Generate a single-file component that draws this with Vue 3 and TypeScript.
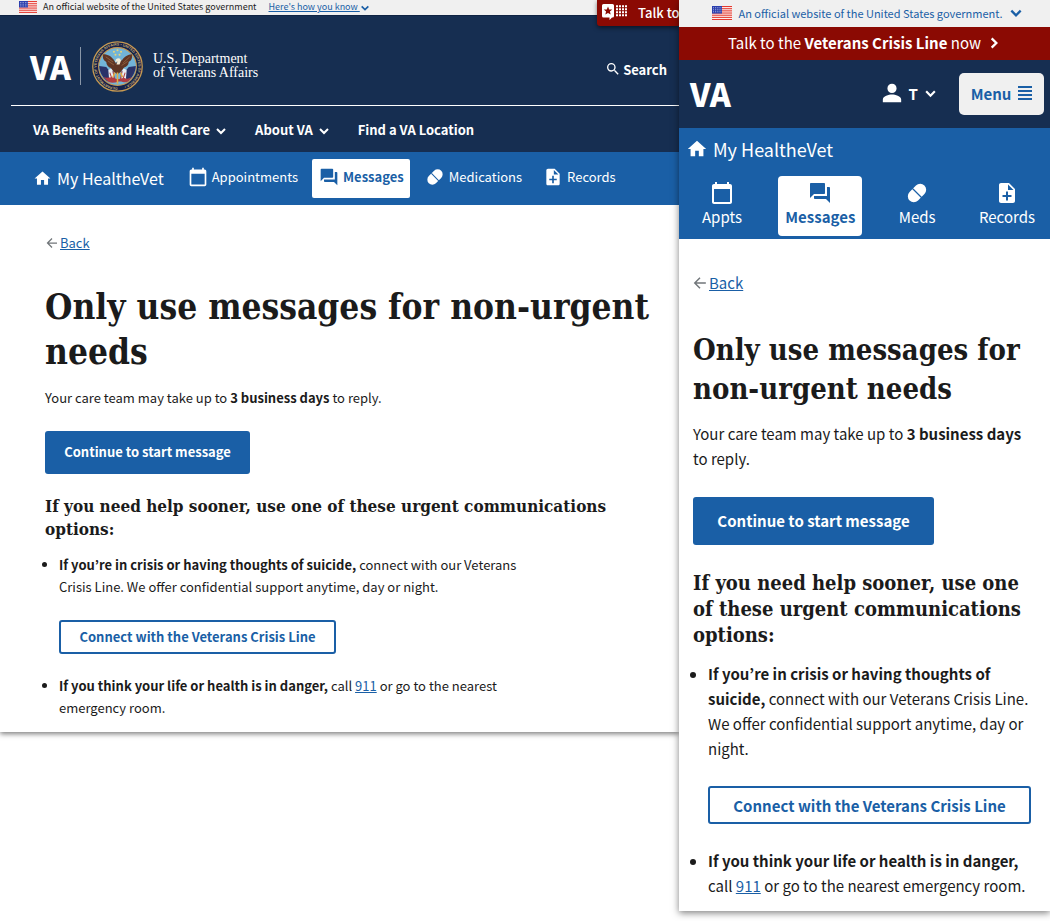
<script setup lang="ts">
interface NavItem {
  label: string
  icon: 'calendar' | 'forum' | 'pill' | 'record'
  active?: boolean
}

const desktopNav: NavItem[] = [
  { label: 'Appointments', icon: 'calendar' },
  { label: 'Messages', icon: 'forum', active: true },
  { label: 'Medications', icon: 'pill' },
  { label: 'Records', icon: 'record' },
]

const mobileNav: NavItem[] = [
  { label: 'Appts', icon: 'calendar' },
  { label: 'Messages', icon: 'forum', active: true },
  { label: 'Meds', icon: 'pill' },
  { label: 'Records', icon: 'record' },
]

const stripes = [0, 2, 4, 6, 8, 10, 12]
const sealLetters = 'DEPARTMENT OF VETERANS AFFAIRS • UNITED STATES OF AMERICA •'
</script>

<template>
  <svg class="defs" aria-hidden="true">
    <symbol id="i-home" viewBox="0 0 24 24"><path d="M10 20v-6h4v6h5v-8h3L12 3 2 12h3v8z" /></symbol>
    <symbol id="i-calendar" viewBox="0 0 24 24"><path d="M20 3h-1V1h-2v2H7V1H5v2H4c-1.100 0-2 .9-2 2v16c0 1.100.9 2 2 2h16c1.100 0 2-.9 2-2V5c0-1.100-.9-2-2-2zm0 18H4V8h16v13z" /></symbol>
    <symbol id="i-forum" viewBox="0 0 24 24"><path d="M21 6h-2v9H6v2c0 .55.45 1 1 1h11l4 4V7c0-.55-.45-1-1-1zm-4 6V3c0-.55-.45-1-1-1H3c-.55 0-1 .45-1 1v14l4-4h10c.55 0 1-.45 1-1z" /></symbol>
    <symbol id="i-pill" viewBox="0 0 24 24">
      <g transform="rotate(-45 12 12)">
        <path d="M1.500 12a6 6 0 0 1 6-6h9a6 6 0 0 1 0 12h-9a6 6 0 0 1-6-6zM11.400 6v12h1.200V6z" fill-rule="evenodd" />
      </g>
    </symbol>
    <symbol id="i-record" viewBox="0 0 24 24"><path fill-rule="evenodd" d="M14 2H6c-1.100 0-2 .9-2 2v16c0 1.100.9 2 2 2h12c1.100 0 2-.9 2-2V8zm-1 1.500L18.500 9H13zM11 10.500h2V14h3.500v2H13v3.500h-2V16H7.500v-2H11z" /></symbol>
    <symbol id="i-search" viewBox="0 0 24 24"><path d="M15.500 14h-.79l-.28-.27A6.470 6.470 0 0 0 16 9.500 6.500 6.500 0 1 0 9.500 16c1.610 0 3.090-.59 4.230-1.570l.27.28v.79l5 4.990L20.490 19zm-6 0a4.500 4.500 0 1 1 0-9 4.500 4.500 0 0 1 0 9z" /></symbol>
    <symbol id="i-person" viewBox="0 0 24 24"><path d="M12 12c2.800 0 5-2.200 5-5s-2.200-5-5-5-5 2.200-5 5 2.200 5 5 5zm0 1.500c-3.500 0-10 1.700-10 5.500v3h20v-3c0-3.800-6.500-5.500-10-5.500z" /></symbol>
    <symbol id="i-chevron" viewBox="0 0 24 24"><path d="M4 8l8 8 8-8" fill="none" stroke="currentColor" stroke-width="4" /></symbol>
    <symbol id="i-back" viewBox="0 0 24 24"><path d="M22 12H4M12 3l-9 9 9 9" fill="none" stroke="currentColor" stroke-width="2.500" /></symbol>
    <symbol id="i-flag" viewBox="0 0 26 16" preserveAspectRatio="none">
      <rect width="26" height="16" fill="#fff" />
      <rect v-for="s in stripes" :key="s" x="0" :y="s * 16 / 13" width="26" height="1.300" fill="#e4392f" />
      <rect width="13" height="8.600" fill="#2b3fae" />
      <path d="M1.500 2h11M1.500 4.300h11M1.500 6.600h11" stroke="#fff" stroke-width=".9" stroke-dasharray="1 1.400" />
    </symbol>
  </svg>

  <div class="board">
    <section class="panel desktop" aria-label="Desktop view">
      <div class="gov">
        <svg class="flag"><use href="#i-flag" /></svg>
        <span>An official website of the United States government</span>
        <a href="#how">Here's how you know <svg class="chev"><use href="#i-chevron" /></svg></a>
      </div>
      <button class="crisis-tab" type="button">
        <svg viewBox="0 0 25 16" class="chat">
          <path fill="#fff" d="M1.500 0h9A1.500 1.500 0 0 1 12 1.500v10.500a1.500 1.500 0 0 1-1.500 1.500H10L7.500 16v-2.500h-6A1.500 1.500 0 0 1 0 12V1.500A1.500 1.500 0 0 1 1.500 0z" />
          <path fill="#8b0a03" d="M6 2.500l1.200 2.900 3.100.2-2.400 2 .8 3L6 9l-2.700 1.600.8-3-2.400-2 3.100-.2z" />
          <path d="M14 2.200h11M14 5.200h11M14 8.200h11M14 11.200h11" stroke="#fff" stroke-width="2" stroke-dasharray="2 1" />
        </svg>
        <span>Talk to</span>
      </button>

      <header class="masthead">
        <div class="brand">
          <span class="va">VA</span>
          <span class="rule"></span>
          <svg class="seal" viewBox="0 0 100 100" aria-label="Department seal">
            <defs><path id="ring" d="M50 91a41 41 0 1 1 .1 0z" /></defs>
            <circle cx="50" cy="50" r="48.500" fill="#15224c" stroke="#c79a52" stroke-width="2.500" />
            <text class="ringtext"><textPath href="#ring">{{ sealLetters }}</textPath></text>
            <circle cx="50" cy="50" r="37" fill="#72b4d8" stroke="#c79a52" stroke-width="2" />
            <path d="M14 49l14 2 7 9-3 20C21 73 15 62 14 49zM86 49l-14 2-7 9 3 20c11-7 17-18 18-31z" fill="#2a3268" />
            <path d="M32 57l8-4 2 22-8 5zM68 57l-8-4-2 22 8 5z" fill="#e9edf2" />
            <path d="M22 70c8 5 15-2 23 3s14-3 20 0 9-1 14-3l-8 9c-6 5-12-1-20 1s-16 4-22-3z" fill="#b13c42" />
            <path d="M35 62l5 15M41 59l4 19M65 62l-5 15M59 59l-4 19" stroke="#b13c42" stroke-width="2" />
            <path d="M22 26c10 0 16 5 20 10l5 8 3-5c2-4 6-4 8 0 4-6 10-12 20-13 2 8-1 12-6 15 0 6-4 9-9 11l-7 9-6 4-7-4-6-8c-5-2-9-6-9-12-6-3-8-8-6-15z" fill="#603524" />
            <path d="M27 31l14 10M31 39l12 8M74 31L61 43M70 40l-12 8" stroke="#9a6740" stroke-width="1.500" />
            <path d="M47 36c4-4 9-2 10 2l-3 8h-6l2-6-5 1z" fill="#f4ecd8" />
            <path d="M45 62l-4 9M56 62l4 9M50 62v22" stroke="#e5ae45" stroke-width="3" />
            <g fill="#e9d477"><circle cx="50" cy="18" r="2" /><circle cx="43" cy="21" r="2" /><circle cx="57" cy="21" r="2" /><circle cx="46" cy="27" r="2" /><circle cx="54" cy="27" r="2" /></g>
          </svg>
          <span class="dept">U.S. Department<br>of Veterans Affairs</span>
        </div>
        <button class="search" type="button"><svg><use href="#i-search" /></svg>Search</button>
      </header>
      <nav class="mega" aria-label="Main">
        <button type="button">VA Benefits and Health Care <svg class="chev"><use href="#i-chevron" /></svg></button>
        <button type="button">About VA <svg class="chev"><use href="#i-chevron" /></svg></button>
        <a href="#find">Find a VA Location</a>
      </nav>
      <nav class="portal" aria-label="My HealtheVet">
        <a class="home" href="#home"><svg><use href="#i-home" /></svg>My HealtheVet</a>
        <a v-for="item in desktopNav" :key="item.label" :href="'#' + item.icon" class="tab" :class="{ active: item.active }">
          <svg><use :href="'#i-' + item.icon" /></svg>{{ item.label }}
        </a>
      </nav>

      <main class="content">
        <div class="back"><svg><use href="#i-back" /></svg><a href="#back">Back</a></div>
        <h1>Only use messages for <span class="keep">non-urgent</span> needs</h1>
        <p>Your care team may take up to <b>3 business days</b> to reply.</p>
        <button class="primary" type="button">Continue to start message</button>
        <h2>If you need help sooner, use one of these urgent communications options:</h2>
        <ul>
          <li>
            <b>If you’re in crisis or having thoughts of suicide,</b> connect with our Veterans Crisis Line. We offer confidential support anytime, day or night.
            <button class="outline" type="button">Connect with the Veterans Crisis Line</button>
          </li>
          <li><b>If you think your life or health is in danger,</b> call <a href="tel:911">911</a> or go to the nearest emergency room.</li>
        </ul>
      </main>
    </section>

    <section class="panel mobile" aria-label="Mobile view">
      <button class="gov" type="button">
        <svg class="flag"><use href="#i-flag" /></svg>
        <span>An official website of the United States government.</span>
        <svg class="chev"><use href="#i-chevron" /></svg>
      </button>
      <button class="crisis-bar" type="button">
        <span>Talk to the <b>Veterans Crisis Line</b> now</span>
        <svg class="chev"><use href="#i-chevron" /></svg>
      </button>
      <header class="masthead">
        <span class="va">VA</span>
        <button class="user" type="button"><svg class="person"><use href="#i-person" /></svg>T <svg class="chev"><use href="#i-chevron" /></svg></button>
        <button class="menu" type="button">Menu
          <svg viewBox="0 0 14 14"><path d="M0 1h14M0 5h14M0 9h14M0 13h14" stroke="currentColor" stroke-width="2" /></svg>
        </button>
      </header>
      <nav class="portal" aria-label="My HealtheVet mobile">
        <a class="home" href="#home"><svg><use href="#i-home" /></svg>My HealtheVet</a>
        <div class="tabs">
          <a v-for="item in mobileNav" :key="item.label" :href="'#m-' + item.icon" class="tab" :class="{ active: item.active }">
            <svg><use :href="'#i-' + item.icon" /></svg>{{ item.label }}
          </a>
        </div>
      </nav>

      <main class="content">
        <div class="back"><svg><use href="#i-back" /></svg><a href="#back">Back</a></div>
        <h1>Only use messages for <span class="keep">non-urgent</span> needs</h1>
        <p>Your care team may take up to <b>3 business days</b> to reply.</p>
        <button class="primary" type="button">Continue to start message</button>
        <h2>If you need help sooner, use one of these urgent communications options:</h2>
        <ul>
          <li>
            <b>If you’re in crisis or having thoughts of suicide,</b> connect with our Veterans Crisis Line. We offer confidential support anytime, day or night.
            <button class="outline" type="button">Connect with the Veterans Crisis Line</button>
          </li>
          <li><b>If you think your life or health is in danger,</b> call <a href="tel:911">911</a> or go to the nearest emergency room.</li>
        </ul>
      </main>
    </section>
  </div>
</template>

<style>
body {
  margin: 0;
  background: #fff;
}
</style>

<style scoped>
.defs {
  position: absolute;
  width: 0;
  height: 0;
}
.board {
  display: grid;
  grid-template-columns: 679fr 371fr;
  align-items: start;
  padding-bottom: 10px;
  overflow: hidden;
  font-family: "Noto Sans CJK KR", "Noto Sans", sans-serif;
  color: #1b1b1b;
}
button {
  font: inherit;
  color: inherit;
  background: none;
  border: 0;
  padding: 0;
  white-space: nowrap;
}
a {
  color: #1a5fa6;
}
nav a {
  color: #fff;
  text-decoration: none;
}
svg {
  fill: currentColor;
  flex: none;
}
.keep {
  white-space: nowrap;
}
.panel {
  position: relative;
  min-width: 0;
  background: #fff;
}
.desktop {
  box-shadow: 0 2px 5px rgba(0, 0, 0, 0.5);
}
.mobile {
  box-shadow: 0 2px 7px rgba(0, 0, 0, 0.5);
}
.gov {
  display: flex;
  align-items: center;
  background: #f0f0f0;
}
.va {
  font-weight: 900;
  line-height: 1;
  color: #fff;
}
.portal {
  background: #1a5fa6;
  color: #fff;
}
.home,
.tab {
  display: flex;
  align-items: center;
}
.tab.active {
  background: #fff;
  color: #1a5fa6;
  font-weight: 700;
}

.desktop .gov {
  height: 15px;
  box-sizing: border-box;
  padding: 0 0 2px 19px;
  gap: 6px;
  font-size: 9px;
  line-height: 13px;
  white-space: nowrap;
}
.desktop .gov a {
  margin-left: 6px;
}
.desktop .gov .flag {
  width: 18px;
  height: 12px;
}
.desktop .gov .chev {
  width: 10px;
  height: 10px;
  vertical-align: middle;
}
.crisis-tab {
  position: absolute;
  top: 0;
  right: 0;
  width: 82px;
  height: 26px;
  padding: 0 0 2px 5px;
  display: flex;
  align-items: center;
  gap: 11px;
  background: #8b0a03;
  color: #fff;
  font-size: 13px;
  font-weight: 500;
  border-bottom-left-radius: 3px;
  box-shadow: 0 2px 4px rgba(0, 0, 0, 0.5);
}
.chat {
  width: 25px;
  height: 16px;
}
.desktop .masthead {
  display: flex;
  align-items: center;
  justify-content: space-between;
  height: 91px;
  box-sizing: border-box;
  padding: 10px 12px 0 30px;
  border-top: 1px solid #0f2342;
  background: linear-gradient(#fff, #fff) 11px 100% / 100% 1px no-repeat #162e51;
  color: #fff;
}
.brand {
  display: flex;
  align-items: center;
}
.desktop .va {
  font-size: 32px;
}
.rule {
  width: 1px;
  height: 38px;
  margin: 0 11px 0 9px;
  background: #8a97a8;
}
.seal {
  width: 51px;
  height: 51px;
}
.ringtext {
  font: 700 7px "Liberation Sans", sans-serif;
  fill: #c9ab6d;
}
.dept {
  margin-left: 10px;
  font: 14px/14px "Liberation Serif", serif;
}
.search {
  display: flex;
  align-items: center;
  gap: 2px;
  padding-top: 6px;
  font-size: 13px;
  font-weight: 700;
}
.search svg {
  width: 16px;
  height: 16px;
}
.mega {
  display: flex;
  align-items: center;
  gap: 28px;
  height: 46px;
  padding-left: 33px;
  background: #162e51;
  color: #fff;
  font-size: 13px;
  font-weight: 700;
}
.mega .chev {
  width: 12px;
  height: 12px;
  margin-left: 2px;
  vertical-align: middle;
}
.desktop .portal {
  display: flex;
  align-items: center;
  height: 53px;
  box-sizing: border-box;
  padding: 0 0 1px 33px;
  font-size: 13px;
}
.desktop .home {
  gap: 5px;
  margin-right: 17px;
  font-size: 16px;
}
.desktop .home svg {
  width: 19px;
  height: 19px;
}
.desktop .tab {
  gap: 4px;
  box-sizing: border-box;
  height: 39px;
  padding: 0 6px 3px 7px;
  margin-right: 8px;
  border-radius: 2px;
}
.desktop .tab svg {
  width: 20px;
  height: 20px;
}

.content ul {
  margin: 0;
  padding: 0;
}
.content h1,
.content h2 {
  font-family: "DejaVu Serif Condensed", "DejaVu Serif", serif;
  font-weight: 700;
  margin: 0;
}
.content p {
  margin: 0;
}
.back {
  display: flex;
  align-items: center;
  color: #71767a;
}
.primary {
  display: block;
  box-sizing: border-box;
  padding-bottom: 2px;
  background: #1a5fa6;
  color: #fff;
  font-weight: 700;
  border-radius: 3px;
}
.outline {
  display: block;
  box-sizing: border-box;
  border: 2px solid #1a5fa6;
  border-radius: 3px;
  color: #1a5fa6;
  font-weight: 700;
}

.desktop .content {
  padding: 27px 20px 13px 45px;
  font-size: 13px;
  line-height: 22px;
}
.desktop .back svg {
  width: 12px;
  height: 12px;
  margin: 0 2px 0 1px;
}
.desktop h1 {
  margin: 30px 0 13px;
  font-size: 35px;
  line-height: 45px;
}
.desktop .primary {
  width: 205px;
  height: 43px;
  margin: 22px 0 21px;
}
.desktop h2 {
  font-size: 17px;
  line-height: 23px;
  margin-bottom: 13px;
}
.desktop li {
  margin-left: 14px;
  max-width: 480px;
}
.desktop .outline {
  width: 277px;
  height: 34px;
  margin: 22px 0 21px;
}

.mobile .gov {
  width: 100%;
  height: 27px;
  padding: 0 0 2px 6px;
  justify-content: center;
  gap: 6px;
  color: #1a5fa6;
  font-size: 11px;
}
.mobile .gov .flag {
  width: 20px;
  height: 14px;
}
.mobile .gov .chev {
  width: 14px;
  height: 14px;
}
.crisis-bar {
  display: flex;
  width: 100%;
  height: 33px;
  padding-bottom: 2px;
  align-items: center;
  justify-content: center;
  gap: 6px;
  background: #8b0a03;
  color: #fff;
  font-size: 15px;
}
.crisis-bar .chev {
  width: 14px;
  height: 14px;
  transform: rotate(-90deg);
}
.mobile .masthead {
  display: flex;
  align-items: center;
  height: 68px;
  padding: 0 6px 0 11px;
  background: #162e51;
  color: #fff;
}
.mobile .va {
  font-size: 32px;
  padding-bottom: 2px;
  margin-right: auto;
}
.user {
  display: flex;
  align-items: center;
  gap: 6px;
  padding-bottom: 2px;
  margin-right: 22px;
  font-size: 15px;
  font-weight: 700;
}
.person {
  width: 22px;
  height: 22px;
}
.user .chev {
  width: 13px;
  height: 13px;
}
.menu {
  display: flex;
  align-items: center;
  justify-content: center;
  gap: 7px;
  width: 85px;
  height: 42px;
  padding-bottom: 2px;
  border-radius: 5px;
  background: #f0f0f0;
  color: #1a5fa6;
  font-size: 15px;
  font-weight: 700;
}
.menu svg {
  width: 14px;
  height: 14px;
}
.mobile .portal {
  height: 111px;
}
.mobile .home {
  height: 42px;
  padding-left: 7px;
  gap: 5px;
  font-size: 18px;
}
.mobile .home svg {
  width: 22px;
  height: 22px;
}
.tabs {
  display: flex;
  justify-content: space-between;
  padding: 6px 8px 0 16px;
}
.mobile .tab {
  flex-direction: column;
  box-sizing: border-box;
  height: 60px;
  padding: 5px 7px 0;
  border-radius: 4px;
  font-size: 15px;
  line-height: 24px;
}
.mobile .tab svg {
  width: 24px;
  height: 24px;
}
.mobile .content {
  padding: 31px 19px 13px 14px;
  font-size: 15px;
  line-height: 25px;
}
.mobile .back svg {
  width: 14px;
  height: 14px;
  margin-right: 2px;
}
.mobile h1 {
  margin: 36px 0 12px;
  font-size: 29px;
  line-height: 39px;
}
.mobile .primary {
  width: 241px;
  height: 48px;
  margin: 26px 0 25px;
}
.mobile h2 {
  font-size: 20px;
  line-height: 26px;
  margin-bottom: 13px;
}
.mobile li {
  margin-left: 15px;
}
.mobile .outline {
  width: 100%;
  height: 38px;
  margin: 25px 0 24px;
}
</style>
